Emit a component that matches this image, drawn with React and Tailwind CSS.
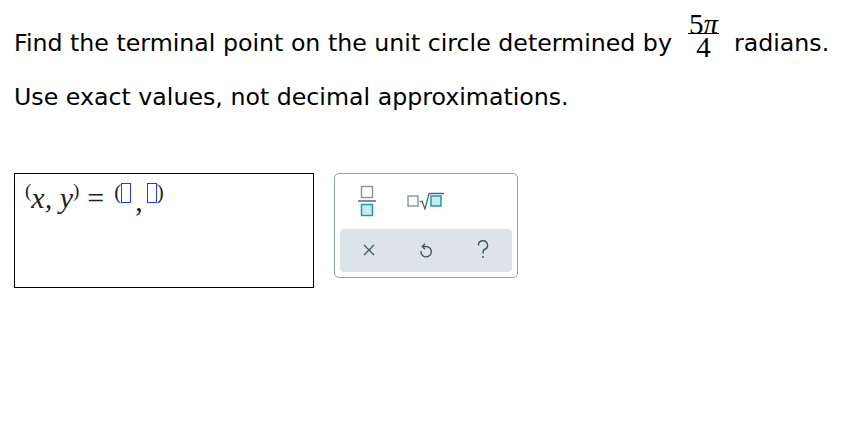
const Box = ({ className = '' }) => (
  <span className={`inline-block w-[10px] h-[20px] border border-[#1a3cff] ${className}`} />
);

const FracIcon = () => (
  <svg width="20" height="32" viewBox="0 0 20 32">
    <rect x="4.5" y="1.5" width="11" height="11" fill="#fff" stroke="#8e9aa0" strokeWidth="1.5" />
    <line x1="1" y1="16" x2="19" y2="16" stroke="#55666e" strokeWidth="1.5" />
    <rect x="4.5" y="19.5" width="11" height="11" fill="#c8eaf2" stroke="#1a9bb0" strokeWidth="1.5" />
  </svg>
);

const RootIcon = () => (
  <svg width="38" height="18" viewBox="0 0 38 18">
    <rect x="1" y="4" width="10" height="10" fill="#fff" stroke="#8e9aa0" strokeWidth="1.5" />
    <path d="M12.5 10 L15 9 L18 17 L22 1.5 L37 1.5" fill="none" stroke="#55666e" strokeWidth="1.3" />
    <rect x="24" y="4" width="10" height="10" fill="#c8eaf2" stroke="#1a9bb0" strokeWidth="1.5" />
  </svg>
);

const XIcon = () => (
  <svg width="14" height="14" viewBox="0 0 14 14">
    <path d="M2 2 L12 12 M12 2 L2 12" stroke="#3f5a66" strokeWidth="1.4" />
  </svg>
);

const UndoIcon = () => (
  <svg width="14" height="18" viewBox="0 0 14 18">
    <path d="M3.5 5.5 H7 A5.2 5.2 0 1 1 2 10" fill="none" stroke="#3f5a66" strokeWidth="1.4" />
    <path d="M6 2.8 L3.3 5.5 L6 8.2" fill="none" stroke="#3f5a66" strokeWidth="1.4" />
  </svg>
);

const HelpIcon = () => (
  <svg width="12" height="20" viewBox="0 0 12 20">
    <path d="M1.5 5.5 A4.5 4.5 0 1 1 7.5 9.5 C6 10.2 6 11 6 13.5" fill="none" stroke="#3f5a66" strokeWidth="1.4" />
    <circle cx="6" cy="17" r="1" fill="#3f5a66" />
  </svg>
);

export default function App() {
  return (
    <div className="w-[848px] h-[440px] bg-white text-black font-['DejaVu_Sans',Verdana,sans-serif]">
      <div className="pl-[14px] pt-[15px] flex items-center text-[23.7px] leading-none">
        <span className="mt-[12px]">Find the terminal point on the unit circle determined by</span>
        <span className="inline-flex flex-col items-center ml-[16px] mr-[15px] font-['Liberation_Serif',serif] text-[29px] leading-none">
          <span className="px-[1px] border-b border-black leading-[18px]">
            5<span className="italic">π</span>
          </span>
          <span className="leading-[25px] pt-[1px]">4</span>
        </span>
        <span className="mt-[12px]">radians.</span>
      </div>
      <div className="pl-[14px] mt-[26px] text-[23.7px] leading-none">
        Use exact values, not decimal approximations.
      </div>
      <div className="flex items-start mt-[63px] pl-[14px]">
        <div className="w-[300px] h-[115px] border border-black pl-[10px] pt-[9px]">
          <div className="flex items-center font-['Liberation_Serif',serif] text-[30px] leading-none text-[#222]">
            <span className="relative -top-[7px] text-[19px]">(</span>
            <span className="italic">x,&nbsp;y</span>
            <span className="relative -top-[7px] text-[19px]">)</span>
            <span className="ml-[8px] mr-[10px]">=</span>
            <span className="relative -top-[5px] text-[21px]">(</span>
            <Box className="relative -top-[5px]" />
            <span className="relative top-[3px] mx-[4px]">,</span>
            <Box className="relative -top-[5px]" />
            <span className="relative -top-[5px] text-[21px]">)</span>
          </div>
        </div>
        <div className="ml-[20px] w-[184px] h-[105px] border border-[#8ea3ad] rounded-[5px] px-[5px] pt-[9px] pb-[5px] flex flex-col">
          <div className="flex items-center h-[37px] pl-[17px]">
            <FracIcon />
            <span className="ml-[30px]"><RootIcon /></span>
          </div>
          <div className="mt-[9px] flex-1 bg-[#dde4e7] rounded-[4px] grid grid-cols-3 place-items-center">
            <XIcon />
            <UndoIcon />
            <HelpIcon />
          </div>
        </div>
      </div>
    </div>
  );
}
